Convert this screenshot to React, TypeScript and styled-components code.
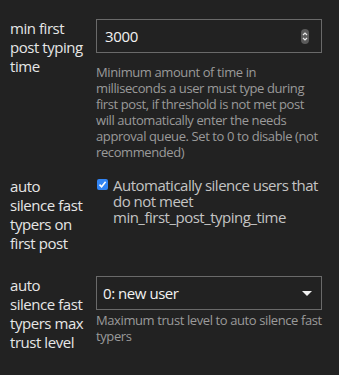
import React from 'react'
import styled, { createGlobalStyle } from 'styled-components'

const GlobalStyle = createGlobalStyle`
  html, body {
    margin: 0;
    padding: 0;
    background: #222222;
  }
  body {
    font-family: 'Open Sans', 'Noto Sans', 'DejaVu Sans', sans-serif;
    -webkit-font-smoothing: antialiased;
  }
`

const Page = styled.div`
  width: 339px;
  min-height: 375px;
  box-sizing: border-box;
  padding: 19px 17px 0 10px;
  background: #222222;
`

const Row = styled.div<{ $spacing: number }>`
  display: grid;
  grid-template-columns: 76px 1fr;
  column-gap: 10px;
  margin-bottom: ${({ $spacing }) => $spacing}px;
`

const Label = styled.div`
  font-size: 15px;
  line-height: 19px;
  letter-spacing: -0.45px;
  color: #e6e6e6;
`

const Value = styled.div`
  display: flex;
  flex-direction: column;
  min-width: 0;
`

const Field = styled.div<{ $height: number }>`
  display: flex;
  align-items: center;
  height: ${({ $height }) => $height}px;
  box-sizing: border-box;
  border: 1px solid #6a6a6a;
  background: #222222;
`

const NumberInput = styled.input`
  flex: 1;
  min-width: 0;
  border: none;
  outline: none;
  background: transparent;
  padding: 0 0 0 8px;
  font-family: inherit;
  font-size: 15px;
  letter-spacing: -0.3px;
  color: #f2f2f2;
`

const SelectText = styled.span`
  flex: 1;
  padding-left: 6px;
  font-size: 15px;
  letter-spacing: -0.45px;
  color: #f2f2f2;
`

const Spinner = styled.svg`
  margin-right: 12px;
  flex-shrink: 0;
`

const Caret = styled.svg`
  margin-right: 9px;
  flex-shrink: 0;
`

const Description = styled.div<{ $gap: number }>`
  margin-top: ${({ $gap }) => $gap}px;
  font-size: 13px;
  line-height: 16px;
  letter-spacing: -0.4px;
  color: #9a9a9a;
`

const CheckRow = styled.label`
  display: flex;
  align-items: flex-start;
  gap: 5px;
  padding-left: 1px;
`

const CheckBox = styled.span`
  flex-shrink: 0;
  display: flex;
  align-items: center;
  justify-content: center;
  width: 11px;
  height: 11px;
  margin-top: 2px;
  border-radius: 2px;
  background: #3184f4;
`

const CheckText = styled.span`
  font-size: 15px;
  line-height: 16px;
  letter-spacing: -0.5px;
  color: #c4c4c4;
`

export default function App() {
  return (
    <>
      <GlobalStyle />
      <Page>
        <Row $spacing={17}>
          <Label>min first post typing time</Label>
          <Value>
            <Field $height={34}>
              <NumberInput defaultValue="3000" />
              <Spinner width="8" height="15" viewBox="0 0 8 15">
                <rect x="0" y="0" width="8" height="15" rx="4" fill="#5a5a5a" />
                <path d="M2 6 L4 4 L6 6" stroke="#e8e8e8" strokeWidth="1.2" fill="none" />
                <path d="M2 9 L4 11 L6 9" stroke="#e8e8e8" strokeWidth="1.2" fill="none" />
              </Spinner>
            </Field>
            <Description $gap={11}>
              Minimum amount of time in milliseconds a user must type during first post, if
              threshold is not met post will automatically enter the needs approval queue. Set
              to 0 to disable (not recommended)
            </Description>
          </Value>
        </Row>

        <Row $spacing={23}>
          <Label>auto silence fast typers on first post</Label>
          <Value>
            <CheckRow>
              <CheckBox>
                <svg width="9" height="9" viewBox="0 0 9 9">
                  <path d="M1.5 4.6 L3.6 6.7 L7.6 1.8" stroke="#ffffff" strokeWidth="1.6" fill="none" />
                </svg>
              </CheckBox>
              <CheckText>
                Automatically silence users that do not meet min_first_post_typing_time
              </CheckText>
            </CheckRow>
          </Value>
        </Row>

        <Row $spacing={0}>
          <Label>auto silence fast typers max trust level</Label>
          <Value>
            <Field $height={34}>
              <SelectText>0: new user</SelectText>
              <Caret width="10" height="5" viewBox="0 0 10 5">
                <path d="M0 0 L10 0 L5 5 Z" fill="#f0f0f0" />
              </Caret>
            </Field>
            <Description $gap={2}>
              Maximum trust level to auto silence fast typers
            </Description>
          </Value>
        </Row>
      </Page>
    </>
  )
}
